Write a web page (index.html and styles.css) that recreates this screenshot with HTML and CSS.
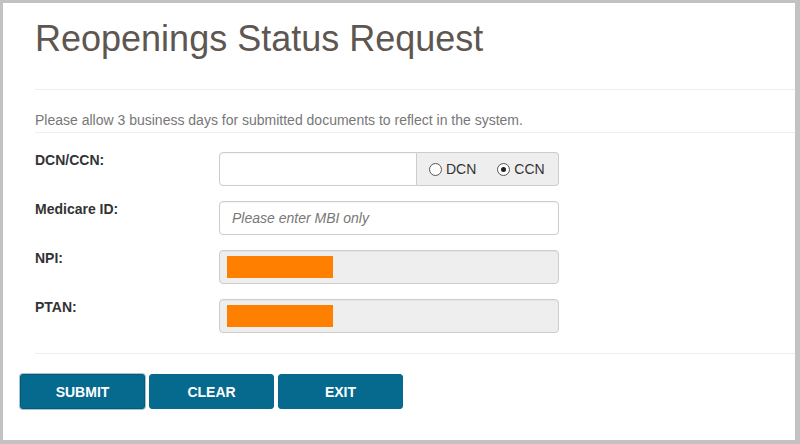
FILE: index.html
```html
<!DOCTYPE html>
<html lang="en">
<head>
<meta charset="utf-8">
<title>Reopenings Status Request</title>
<link rel="stylesheet" href="styles.css">
</head>
<body>
<div class="frame">
  <div class="content">
    <h1 class="title">Reopenings Status Request</h1>
    <div class="rule rule-title"></div>
    <p class="notice">Please allow 3 business days for submitted documents to reflect in the system.</p>
    <div class="rule"></div>
    <form class="form">
      <div class="row">
        <label class="label" for="dcn">DCN/CCN:</label>
        <div class="group">
          <input class="field field-grouped" id="dcn" type="text">
          <div class="addon">
            <label class="choice"><input class="radio" type="radio" name="kind" value="dcn"><span>DCN</span></label>
            <label class="choice"><input class="radio" type="radio" name="kind" value="ccn" checked><span>CCN</span></label>
          </div>
        </div>
      </div>
      <div class="row">
        <label class="label" for="mbi">Medicare ID:</label>
        <input class="field" id="mbi" type="text" placeholder="Please enter MBI only">
      </div>
      <div class="row">
        <span class="label">NPI:</span>
        <div class="field field-disabled"><span class="redact"></span></div>
      </div>
      <div class="row">
        <span class="label">PTAN:</span>
        <div class="field field-disabled"><span class="redact"></span></div>
      </div>
    </form>
    <div class="rule rule-bottom"></div>
  </div>
  <div class="actions">
    <button class="btn btn-focus" type="button">SUBMIT</button>
    <button class="btn" type="button">CLEAR</button>
    <button class="btn" type="button">EXIT</button>
  </div>
</div>
</body>
</html>
```

FILE: styles.css
```css
* { box-sizing: border-box; }

html, body {
  margin: 0;
  padding: 0;
  background: #ffffff;
}

body {
  font-family: "Liberation Sans", Arial, sans-serif;
  font-size: 14px;
  color: #333333;
}

.frame {
  width: 800px;
  height: 444px;
  border-top: 3px solid #c2c2c2;
  border-left: 3px solid #c2c2c2;
  border-right: 5px solid #c2c2c2;
  border-bottom: 4px solid #c2c2c2;
  background: #ffffff;
  overflow: hidden;
}

.content {
  padding-left: 32px;
}

.title {
  margin: 16px 0 0;
  font-size: 36px;
  line-height: 40px;
  font-weight: normal;
  color: #5e5650;
}

.rule {
  height: 1px;
  background: #eeeeee;
}

.rule-title { margin-top: 30px; }

.notice {
  margin: 20px 0 2px;
  line-height: 20px;
  font-size: 14px;
  color: #777777;
}

.form {
  display: flex;
  flex-direction: column;
  gap: 13px;
  margin-top: 17px;
}

.row {
  display: flex;
  align-items: flex-start;
}

.label {
  width: 184px;
  flex: none;
  font-weight: bold;
  line-height: 20px;
  color: #333333;
}

.field {
  width: 340px;
  height: 34px;
  margin: 2px 0 0;
  padding: 0 12px;
  border: 1px solid #cccccc;
  border-radius: 4px;
  background: #ffffff;
  font-family: "Liberation Sans", Arial, sans-serif;
  font-size: 14px;
  color: #555555;
  box-shadow: inset 0 1px 1px rgba(0,0,0,0.04);
}

.field::placeholder {
  color: #777777;
  font-style: italic;
}

.group {
  display: flex;
  width: 340px;
  height: 34px;
  margin-top: 2px;
}

.field-grouped {
  width: 198px;
  height: 34px;
  margin: 0;
  border-radius: 4px 0 0 4px;
}

.addon {
  flex: 1;
  display: flex;
  align-items: center;
  gap: 21px;
  padding-left: 12px;
  border: 1px solid #cccccc;
  border-left: none;
  border-radius: 0 4px 4px 0;
  background: #eeeeee;
}

.choice {
  display: flex;
  align-items: center;
  gap: 4px;
  color: #333333;
  font-size: 14px;
}

.radio {
  appearance: none;
  -webkit-appearance: none;
  width: 13px;
  height: 13px;
  margin: 0;
  border: 1px solid #555555;
  border-radius: 50%;
  background: #ffffff;
  display: grid;
  place-content: center;
}

.radio:checked::after {
  content: "";
  width: 5px;
  height: 5px;
  border-radius: 50%;
  background: #222222;
}

.field-disabled {
  display: flex;
  align-items: center;
  padding: 0 0 0 7px;
  background: #eeeeee;
}

.redact {
  width: 106px;
  height: 22px;
  background: #ff8000;
}

.rule-bottom { margin-top: 20px; }

.actions {
  display: flex;
  gap: 4px;
  padding: 20px 0 0 17px;
}

.btn {
  width: 125px;
  height: 35px;
  padding: 0;
  border: 1px solid #066a8f;
  border-radius: 3px;
  background: #066a8f;
  color: #ffffff;
  font-family: "Liberation Sans", Arial, sans-serif;
  font-size: 14px;
  font-weight: bold;
  cursor: pointer;
}

.btn-focus {
  border-color: #045a7c;
  box-shadow: 0 0 0 1px rgba(4, 90, 124, 0.35);
}
```
